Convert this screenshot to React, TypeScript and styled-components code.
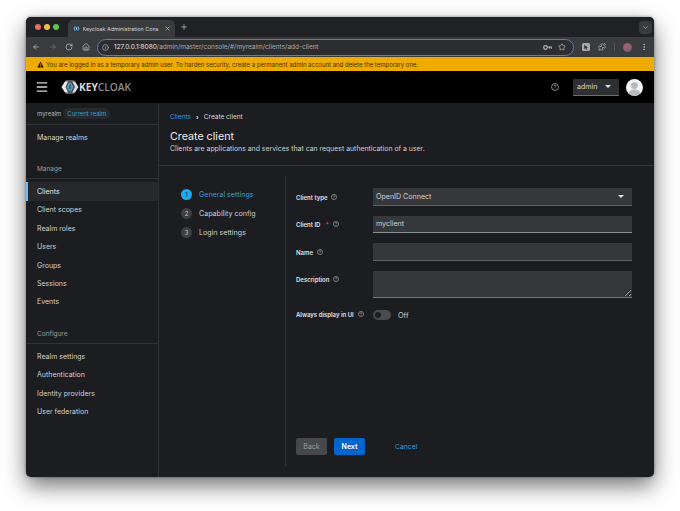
import React from "react";
import styled, { createGlobalStyle } from "styled-components";
import {
  ArrowLeft,
  ArrowRight,
  ChevronDown,
  EllipsisVertical,
  House,
  Info,
  Menu,
  Plus,
  Puzzle,
  RotateCw,
  Star,
  X,
} from "lucide-react";

const GlobalStyle = createGlobalStyle`
  html, body {
    margin: 0;
    height: 100%;
    background: #ffffff;
    font-family: "Inter", "Liberation Sans", sans-serif;
  }
`;

const Page = styled.div`
  width: 680px;
  height: 511px;
  padding: 17px 26px 34px;
  box-sizing: border-box;
  overflow: hidden;
`;

const Win = styled.div`
  height: 460px;
  display: flex;
  flex-direction: column;
  border-radius: 5px;
  overflow: hidden;
  background: #1b1d21;
  box-shadow: 0 9px 22px rgba(0, 0, 0, 0.55), 0 0 3px rgba(0, 0, 0, 0.45);
`;

const TabStrip = styled.div`
  height: 20px;
  flex: none;
  display: flex;
  align-items: flex-end;
  background: #202124;
  padding: 0 2.5px 0 9px;
`;

const Lights = styled.div`
  display: flex;
  gap: 3px;
  align-self: center;
  margin-right: 9px;
`;

const Light = styled.span<{ $c: string }>`
  width: 6px;
  height: 6px;
  border-radius: 50%;
  background: ${(p) => p.$c};
`;

const Tab = styled.div`
  width: 107px;
  height: 17px;
  box-sizing: border-box;
  display: flex;
  align-items: center;
  gap: 3px;
  padding: 0 4px 0 4.5px;
  background: #3a3b3d;
  border-radius: 5px 5px 0 0;
  color: #d5d6d7;
  font-size: 5.4px;
  white-space: nowrap;
`;

const TabTitle = styled.span`
  flex: 1;
  overflow: hidden;
`;

const NewTab = styled.span`
  display: flex;
  align-self: center;
  margin-left: 5px;
  color: #c8c9ca;
`;

const TabMenu = styled.span`
  margin-left: auto;
  align-self: center;
  width: 13px;
  height: 13px;
  border-radius: 4px;
  background: #3a3b3d;
  display: flex;
  align-items: center;
  justify-content: center;
  color: #d5d6d7;
`;

const Toolbar = styled.div`
  height: 20px;
  flex: none;
  display: flex;
  align-items: center;
  background: #3a3b3d;
  padding: 0 6px;
  color: #c6c7c8;
`;

const NavIcons = styled.div`
  display: flex;
  align-items: center;
  gap: 8.5px;
  margin-right: 7.5px;
`;

const Omni = styled.div`
  width: 477px;
  height: 17px;
  box-sizing: border-box;
  display: flex;
  align-items: center;
  gap: 5px;
  padding: 0 7px 0 4px;
  border: 1px solid #4c7fd0;
  border-radius: 9px;
  background: #2c2d2f;
  color: #c6c7c8;
`;

const OmniIcons = styled.div`
  display: flex;
  align-items: center;
  gap: 6px;
`;

const Url = styled.span`
  flex: 1;
  font-size: 6.5px;
  color: #e3e3e3;
`;

const Muted = styled.span`
  color: #a9aaab;
`;

const Actions = styled.div`
  display: flex;
  align-items: center;
  gap: 8px;
  margin-left: 8px;
`;

const Divider = styled.span`
  width: 1px;
  height: 8px;
  background: #55565a;
`;

const Avatar = styled.span`
  width: 9px;
  height: 9px;
  border-radius: 50%;
  background: radial-gradient(circle at 40% 40%, #b0606a, #5a5f7a);
`;

const Banner = styled.div`
  height: 14px;
  flex: none;
  display: flex;
  align-items: center;
  gap: 2.5px;
  padding-left: 10.5px;
  background: #f0ab00;
  color: #3d2f05;
  font-size: 6px;
  white-space: nowrap;
`;

const Masthead = styled.div`
  height: 32px;
  flex: none;
  display: flex;
  align-items: center;
  background: #000000;
  padding: 0 11px 0 9px;
  color: #d8d8d8;
`;

const LogoWrap = styled.div`
  display: flex;
  align-items: center;
  margin-left: 12px;
`;

const LogoText = styled.span`
  font-family: "Open Sans", "Liberation Sans", sans-serif;
  font-size: 10.2px;
  font-weight: 700;
  color: #d8d8d8;
`;

const LogoLight = styled.span`
  font-weight: 600;
  color: #8f8f8f;
`;

const HeadRight = styled.div`
  margin-left: auto;
  display: flex;
  align-items: center;
`;

const UserSelect = styled.div`
  width: 46px;
  height: 17px;
  box-sizing: border-box;
  display: flex;
  align-items: center;
  justify-content: space-between;
  padding: 0 8px 0 4px;
  margin-left: 14px;
  background: #2e2f32;
  border-bottom: 1px solid #6a6e73;
  font-size: 7.1px;
  color: #d8d8d8;
`;

const Caret = styled.span`
  width: 0;
  height: 0;
  border-left: 3px solid transparent;
  border-right: 3px solid transparent;
  border-top: 3px solid #e0e0e0;
`;

const UserAvatar = styled.div`
  margin-left: 7px;
  display: flex;
`;

const Body = styled.div`
  flex: 1;
  display: flex;
  min-height: 0;
`;

const Sidebar = styled.nav`
  width: 133px;
  flex: none;
  box-sizing: border-box;
  border-right: 1px solid #2f3135;
  color: #d2d2d2;
  font-size: 7px;
`;

const RealmRow = styled.div`
  height: 21px;
  display: flex;
  align-items: center;
  gap: 2px;
  padding-left: 11px;
  margin-bottom: 3px;
  border-bottom: 1px solid #2f3135;
  font-size: 6px;
  color: #b8bbbe;
`;

const RealmChip = styled.span`
  padding: 2px 4px;
  border-radius: 8px;
  background: #26292e;
  color: #3b9bd6;
`;

const NavItem = styled.div<{ $active?: boolean }>`
  height: 18.4px;
  display: flex;
  align-items: center;
  box-sizing: border-box;
  padding-left: ${(p) => (p.$active ? 9 : 11)}px;
  border-left: ${(p) => (p.$active ? "2px solid #73bcf7" : "none")};
  background: ${(p) => (p.$active ? "#26282c" : "transparent")};
  color: ${(p) => (p.$active ? "#e6e6e6" : "#d2d2d2")};
`;

const NavHeading = styled.div`
  height: 17px;
  margin: 16px 0 3px;
  box-sizing: border-box;
  padding: 3px 0 0 11px;
  border-bottom: 1px solid #2f3135;
  font-size: 6.5px;
  line-height: 9px;
  color: #9a9da0;
`;

const Main = styled.main`
  flex: 1;
  display: flex;
  flex-direction: column;
  min-width: 0;
`;

const PageHead = styled.div`
  height: 63px;
  flex: none;
  box-sizing: border-box;
  padding: 9.5px 11px 0;
  border-bottom: 1px solid #2f3135;
`;

const Crumbs = styled.div`
  display: flex;
  align-items: center;
  gap: 5px;
  font-size: 6.5px;
  color: #d8d8d8;
`;

const CrumbSep = styled.span`
  font-weight: 700;
`;

const BlueText = styled.span`
  color: #3b9bd6;
`;

const Title = styled.h1`
  margin: 9.5px 0 0;
  font-size: 10.7px;
  line-height: 14px;
  font-weight: 400;
  color: #ececec;
`;

const Subtitle = styled.p`
  margin: 0;
  font-size: 6.9px;
  line-height: 10px;
  color: #d2d2d2;
`;

const Wizard = styled.div`
  flex: 1;
  display: flex;
  min-height: 0;
  padding-bottom: 11px;
`;

const Steps = styled.div`
  width: 127px;
  flex: none;
  box-sizing: border-box;
  margin-top: 10px;
  padding: 12.5px 0 0 22px;
  display: flex;
  flex-direction: column;
  gap: 8px;
  border-right: 1px solid #2f3135;
`;

const Step = styled.div<{ $active?: boolean }>`
  height: 11px;
  display: flex;
  align-items: center;
  gap: 7px;
  font-size: 7.1px;
  color: ${(p) => (p.$active ? "#3b9bd6" : "#cfd0d1")};
`;

const StepNum = styled.span<{ $active?: boolean }>`
  width: 11px;
  height: 11px;
  border-radius: 50%;
  display: flex;
  align-items: center;
  justify-content: center;
  font-size: 6px;
  background: ${(p) => (p.$active ? "#1fa7f8" : "#3c3f42")};
  color: ${(p) => (p.$active ? "#0b2a3f" : "#c8c8c8")};
`;

const FormPane = styled.div`
  flex: 1;
  display: flex;
  flex-direction: column;
  padding: 22px 22px 0 10px;
`;

const Form = styled.div`
  display: grid;
  grid-template-columns: 76.5px 1fr;
  row-gap: 10px;
`;

const Label = styled.label<{ $inline?: boolean }>`
  display: flex;
  align-items: flex-start;
  gap: 4px;
  padding-top: ${(p) => (p.$inline ? 3 : 5.5)}px;
  font-size: 6px;
  font-weight: 600;
  color: #e0e0e0;
  white-space: nowrap;
`;

const Required = styled.span`
  color: #e0554d;
  margin-left: 1px;
`;

const SelectBox = styled.div`
  height: 17.5px;
  box-sizing: border-box;
  display: flex;
  align-items: center;
  justify-content: space-between;
  padding: 0 8px 0 3.5px;
  background: #36373a;
  border-bottom: 1px solid #5e6064;
  font-size: 7.1px;
  color: #d2d2d2;
`;

const TextInput = styled.input<{ $filled?: boolean }>`
  height: 17.5px;
  width: 100%;
  box-sizing: border-box;
  padding: 0 3.5px;
  border: none;
  border-radius: 0;
  outline: none;
  background: #36373a;
  border-bottom: 1px solid ${(p) => (p.$filled ? "#8a8d90" : "#5e6064")};
  font-family: inherit;
  font-size: 7.1px;
  color: #d2d2d2;
`;

const TextArea = styled.textarea`
  display: block;
  height: 27.5px;
  width: 100%;
  box-sizing: border-box;
  padding: 3px;
  border: none;
  border-radius: 0;
  outline: none;
  resize: vertical;
  background: #36373a;
  border-bottom: 1px solid #72757a;
`;

const SwitchRow = styled.div`
  display: flex;
  align-items: center;
  gap: 7.5px;
  font-size: 7.3px;
  color: #c8c8c8;
  height: 14px;
`;

const Track = styled.span`
  width: 18px;
  height: 10.5px;
  border-radius: 5.5px;
  background: #4a4c4f;
  display: flex;
  align-items: center;
  padding-left: 2px;
  box-sizing: border-box;
`;

const Knob = styled.span`
  width: 6.5px;
  height: 6.5px;
  border-radius: 50%;
  background: #1b1d21;
`;

const Buttons = styled.div`
  margin-top: auto;
  display: flex;
  align-items: center;
  gap: 7px;
  height: 17px;
  margin-bottom: 11px;
`;

const Btn = styled.span<{ $primary?: boolean }>`
  width: 31px;
  height: 17px;
  border-radius: 2px;
  display: flex;
  align-items: center;
  justify-content: center;
  font-size: 7px;
  font-weight: ${(p) => (p.$primary ? 600 : 400)};
  background: ${(p) => (p.$primary ? "#0066cc" : "#46484b")};
  color: ${(p) => (p.$primary ? "#ffffff" : "#9a9c9e")};
`;

const CancelLink = styled(BlueText)`
  margin-left: 23px;
  font-size: 6.8px;
`;

const KeycloakMark = () => (
  <svg width="18" height="14" viewBox="0 0 18 14">
    <polygon points="5,0 13,0 17,7 13,14 5,14 1,7" fill="#55575a" />
    <path d="M0.5 7 L4 1.5 H7 L4.4 7 L7 12.5 H4 Z" fill="#ececec" />
    <path d="M17.5 7 L14 1.5 H11.5 L14 7 L11.5 12.5 H14 Z" fill="#dcdcdc" />
    <path d="M8 3 L6 7 L8 11 H9 L7.6 7 L9 3 Z" fill="#39b3f0" />
    <path d="M10 3 L12 7 L10 11 H9 L10.4 7 L9 3 Z" fill="#39b3f0" />
  </svg>
);

const TabFavicon = () => (
  <svg width="7" height="5" viewBox="0 0 18 14">
    <path d="M0.5 7 L4 1 H7.5 L4.6 7 L7.5 13 H4 Z" fill="#39b3f0" />
    <path d="M17.5 7 L14 1 H10.5 L13.4 7 L10.5 13 H14 Z" fill="#39b3f0" />
    <rect x="7.5" y="4" width="3" height="6" fill="#dcdcdc" />
  </svg>
);

const UserIcon = () => (
  <svg width="17" height="17" viewBox="0 0 17 17">
    <circle cx="8.5" cy="8.5" r="8.5" fill="#f4f4f4" />
    <circle cx="8.5" cy="6.6" r="3.4" fill="#b8bbbe" />
    <path d="M2.6 14.6 C3.4 11.4 5.6 10.6 8.5 10.6 C11.4 10.6 13.6 11.4 14.4 14.6 A8.5 8.5 0 0 1 2.6 14.6 Z" fill="#b8bbbe" />
  </svg>
);

const HelpIcon = ({ size = 6 }: { size?: number }) => (
  <svg width={size} height={size} viewBox="0 0 12 12" fill="none" stroke="#c8c8c8" style={{ flex: "none" }}>
    <circle cx="6" cy="6" r="5.2" strokeWidth="1" />
    <path d="M4.4 4.7 C4.4 3.7 5.1 3.2 6 3.2 C6.9 3.2 7.6 3.7 7.6 4.6 C7.6 5.6 6 5.7 6 7" strokeWidth="1" />
    <circle cx="6" cy="8.8" r="0.6" fill="#c8c8c8" stroke="none" />
  </svg>
);

const WarnIcon = () => (
  <svg width="7" height="7" viewBox="0 0 12 12">
    <path d="M6 1 L11.6 11 H0.4 Z" fill="#1f1a06" />
    <rect x="5.4" y="4.4" width="1.2" height="3.6" fill="#f0ab00" />
    <rect x="5.4" y="8.8" width="1.2" height="1.2" fill="#f0ab00" />
  </svg>
);

const PasswordKey = () => (
  <svg width="9" height="7" viewBox="0 0 18 14" fill="none" stroke="#b4b5b6" strokeWidth="2.4">
    <circle cx="5" cy="7" r="3.6" />
    <path d="M8.6 6 H16.5 V9.5 M13 6 V9" />
  </svg>
);

const ExtensionBox = () => (
  <svg width="8" height="8" viewBox="0 0 8 8">
    <rect width="8" height="8" rx="1.5" fill="#a9aaab" />
    <path d="M2.2 1.8 L6 4.6 L4.4 4.8 L5.2 6.4 L4.4 6.7 L3.7 5.2 L2.4 6.2 Z" fill="#2c2d2f" />
  </svg>
);

const manageItems = ["Clients", "Client scopes", "Realm roles", "Users", "Groups", "Sessions", "Events"];
const configureItems = ["Realm settings", "Authentication", "Identity providers", "User federation"];

export default function App() {
  return (
    <>
      <GlobalStyle />
      <Page>
        <Win>
          <TabStrip>
            <Lights>
              <Light $c="#ed6a5e" />
              <Light $c="#f5bf4f" />
              <Light $c="#61c554" />
            </Lights>
            <Tab>
              <TabFavicon />
              <TabTitle>Keycloak Administration Cons</TabTitle>
              <X size={7} />
            </Tab>
            <NewTab>
              <Plus size={8} />
            </NewTab>
            <TabMenu>
              <ChevronDown size={7} />
            </TabMenu>
          </TabStrip>
          <Toolbar>
            <NavIcons>
              <ArrowLeft size={8} />
              <ArrowRight size={8} color="#76777a" />
              <RotateCw size={8} />
              <House size={8} />
            </NavIcons>
            <Omni>
              <Info size={7} />
              <Url>
                127.0.0.1:8080<Muted>/admin/master/console/#/myrealm/clients/add-client</Muted>
              </Url>
              <OmniIcons>
                <PasswordKey />
                <Star size={8} />
              </OmniIcons>
            </Omni>
            <Actions>
              <ExtensionBox />
              <Puzzle size={8} />
              <Divider />
              <Avatar />
              <EllipsisVertical size={8} />
            </Actions>
          </Toolbar>
          <Banner>
            <WarnIcon />
            You are logged in as a temporary admin user. To harden security, create a permanent admin account and delete the temporary one.
          </Banner>
          <Masthead>
            <Menu size={14} strokeWidth={2.4} />
            <LogoWrap>
              <KeycloakMark />
              <LogoText>
                KEY<LogoLight>CLOAK</LogoLight>
              </LogoText>
            </LogoWrap>
            <HeadRight>
              <HelpIcon size={8} />
              <UserSelect>
                admin
                <Caret />
              </UserSelect>
              <UserAvatar>
                <UserIcon />
              </UserAvatar>
            </HeadRight>
          </Masthead>
          <Body>
            <Sidebar>
              <RealmRow>
                myrealm <RealmChip>Current realm</RealmChip>
              </RealmRow>
              <NavItem>Manage realms</NavItem>
              <NavHeading>Manage</NavHeading>
              {manageItems.map((item) => (
                <NavItem key={item} $active={item === "Clients"}>
                  {item}
                </NavItem>
              ))}
              <NavHeading>Configure</NavHeading>
              {configureItems.map((item) => (
                <NavItem key={item}>{item}</NavItem>
              ))}
            </Sidebar>
            <Main>
              <PageHead>
                <Crumbs>
                  <BlueText>Clients</BlueText>
                  <CrumbSep>›</CrumbSep>
                  <span>Create client</span>
                </Crumbs>
                <Title>Create client</Title>
                <Subtitle>Clients are applications and services that can request authentication of a user.</Subtitle>
              </PageHead>
              <Wizard>
                <Steps>
                  <Step $active>
                    <StepNum $active>1</StepNum>General settings
                  </Step>
                  <Step>
                    <StepNum>2</StepNum>Capability config
                  </Step>
                  <Step>
                    <StepNum>3</StepNum>Login settings
                  </Step>
                </Steps>
                <FormPane>
                  <Form>
                    <Label>
                      Client type <HelpIcon />
                    </Label>
                    <SelectBox>
                      OpenID Connect
                      <Caret />
                    </SelectBox>
                    <Label>
                      Client ID <Required>*</Required> <HelpIcon />
                    </Label>
                    <TextInput $filled defaultValue="myclient" />
                    <Label>
                      Name <HelpIcon />
                    </Label>
                    <TextInput />
                    <Label>
                      Description <HelpIcon />
                    </Label>
                    <TextArea />
                    <Label $inline>
                      Always display in UI <HelpIcon />
                    </Label>
                    <SwitchRow>
                      <Track>
                        <Knob />
                      </Track>
                      Off
                    </SwitchRow>
                  </Form>
                  <Buttons>
                    <Btn>Back</Btn>
                    <Btn $primary>Next</Btn>
                    <CancelLink>Cancel</CancelLink>
                  </Buttons>
                </FormPane>
              </Wizard>
            </Main>
          </Body>
        </Win>
      </Page>
    </>
  );
}
